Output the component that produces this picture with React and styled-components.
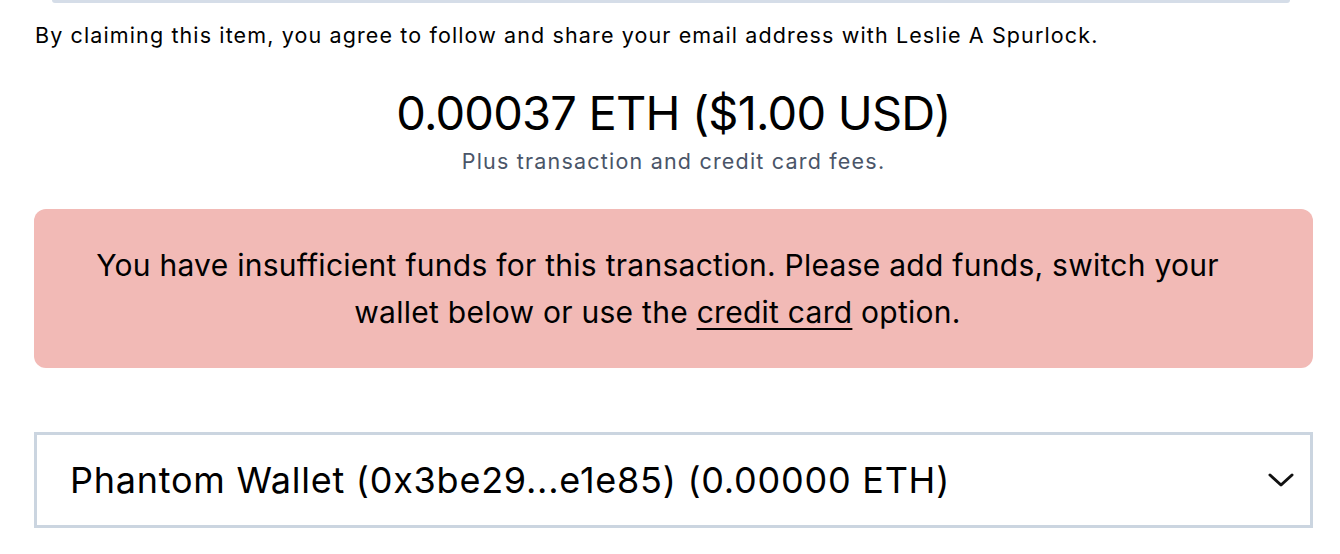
import styled, { createGlobalStyle } from "styled-components";

const GlobalStyle = createGlobalStyle`
  body {
    margin: 0;
    background: #fff;
    font-family: Inter, "Noto Sans", sans-serif;
    color: #000;
  }
`;

const Page = styled.div`
  width: 1279px;
  margin-left: 34px;
  display: flex;
  flex-direction: column;
`;

const TopEdge = styled.div`
  height: 3px;
  margin: 0 23px 0 18px;
  background: #d5dde8;
  border-radius: 0 0 6px 6px;
`;

const Terms = styled.p`
  margin: 18px 0 0 1px;
  font-size: 21.5px;
  letter-spacing: 1.12px;
  line-height: 28px;
`;

const Price = styled.div`
  margin-top: 35px;
  text-align: center;
  font-size: 47px;
  letter-spacing: -0.8px;
  line-height: 58px;
`;

const Fees = styled.div`
  margin-top: 5px;
  text-align: center;
  font-size: 21.5px;
  letter-spacing: 1.2px;
  line-height: 28px;
  color: #4a5568;
`;

const Alert = styled.div`
  margin-top: 34px;
  height: 159px;
  box-sizing: border-box;
  padding: 0 64px 0 32px;
  display: flex;
  align-items: center;
  justify-content: center;
  text-align: center;
  background: #f2bab6;
  border-radius: 12px;
  font-size: 30px;
  letter-spacing: 0.27px;
  line-height: 47px;

  a {
    color: inherit;
    text-decoration: underline;
    text-decoration-thickness: 2px;
    text-underline-offset: 5px;
  }
`;

const Select = styled.div`
  margin-top: 64px;
  height: 96px;
  box-sizing: border-box;
  border: 3px solid #cbd5e0;
  display: flex;
  align-items: center;
  justify-content: space-between;
  padding: 0 15px 0 33px;
  font-size: 36px;
  letter-spacing: 0.75px;
`;

const Chevron = () => (
  <svg width="28" height="18" viewBox="0 0 28 18" fill="none">
    <path d="M3 4 L14 14 L25 4" stroke="#111" strokeWidth="3" strokeLinecap="round" strokeLinejoin="round" />
  </svg>
);

export default function App() {
  return (
    <>
      <GlobalStyle />
      <Page>
        <TopEdge />
        <Terms>By claiming this item, you agree to follow and share your email address with Leslie A Spurlock.</Terms>
        <Price>0.00037 ETH ($1.00 USD)</Price>
        <Fees>Plus transaction and credit card fees.</Fees>
        <Alert>
          <span>
            You have insufficient funds for this transaction. Please add funds, switch your wallet below or use the{" "}
            <a href="#">credit card</a> option.
          </span>
        </Alert>
        <Select>
          <span>Phantom Wallet (0x3be29...e1e85) (0.00000 ETH)</span>
          <Chevron />
        </Select>
      </Page>
    </>
  );
}
